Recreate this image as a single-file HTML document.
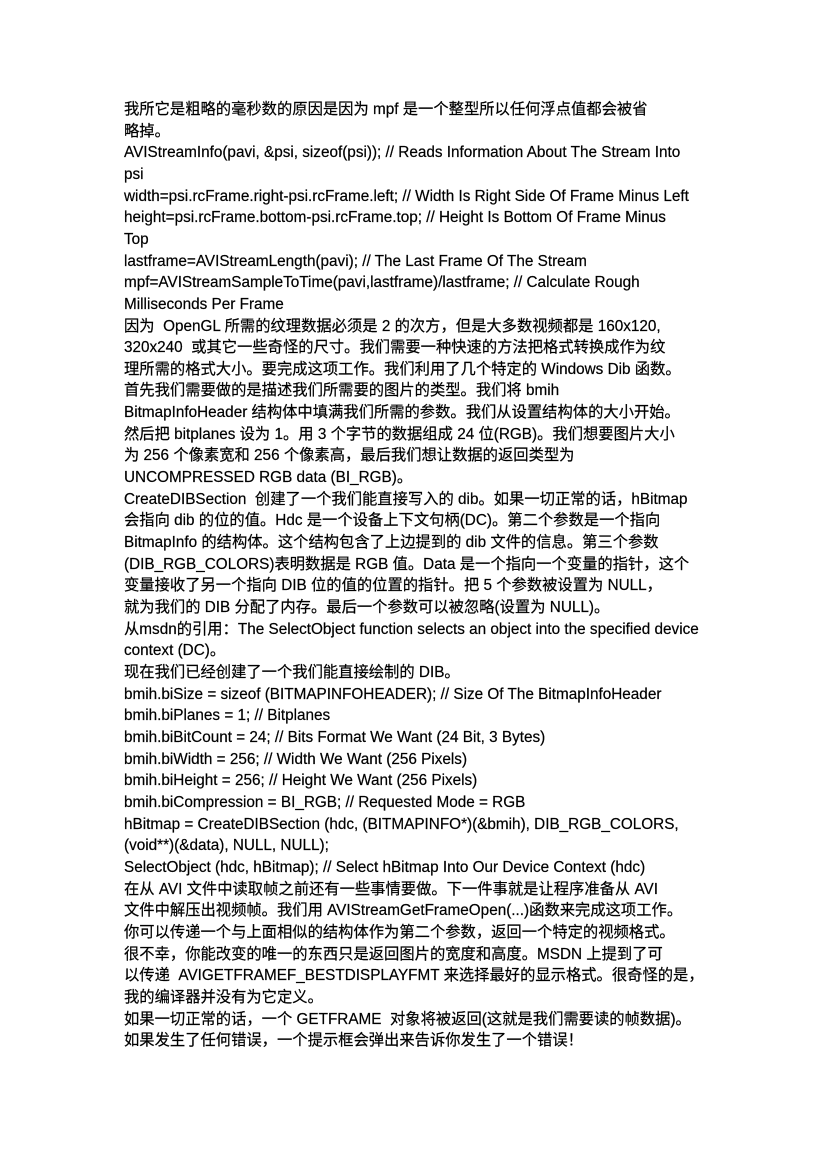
<!DOCTYPE html>
<html><head><meta charset="utf-8">
<style>
html,body{margin:0;padding:0;background:#fff;}
body{width:827px;height:1169px;position:relative;overflow:hidden;}
.l{position:absolute;left:124px;white-space:nowrap;font-family:"Liberation Sans","Noto Sans CJK SC",sans-serif;font-size:15.3px;line-height:20px;color:#000;-webkit-text-stroke:0.2px #000;}
</style></head><body>
<div class="l" style="top:100px">我所它是粗略的毫秒数的原因是因为 mpf 是一个整型所以任何浮点值都会被省</div>
<div class="l" style="top:122px">略掉。</div>
<div class="l" style="top:143px">AVIStreamInfo(pavi, &amp;psi, sizeof(psi)); // Reads Information About The Stream Into</div>
<div class="l" style="top:165px">psi</div>
<div class="l" style="top:187px">width=psi.rcFrame.right-psi.rcFrame.left; // Width Is Right Side Of Frame Minus Left</div>
<div class="l" style="top:208px">height=psi.rcFrame.bottom-psi.rcFrame.top; // Height Is Bottom Of Frame Minus</div>
<div class="l" style="top:230px">Top</div>
<div class="l" style="top:252px">lastframe=AVIStreamLength(pavi); // The Last Frame Of The Stream</div>
<div class="l" style="top:273px">mpf=AVIStreamSampleToTime(pavi,lastframe)/lastframe; // Calculate Rough</div>
<div class="l" style="top:295px">Milliseconds Per Frame</div>
<div class="l" style="top:317px">因为 &nbsp;OpenGL 所需的纹理数据必须是 2 的次方，但是大多数视频都是 160x120,</div>
<div class="l" style="top:338px">320x240 &nbsp;或其它一些奇怪的尺寸。我们需要一种快速的方法把格式转换成作为纹</div>
<div class="l" style="top:360px">理所需的格式大小。要完成这项工作。我们利用了几个特定的 Windows Dib 函数。</div>
<div class="l" style="top:381px">首先我们需要做的是描述我们所需要的图片的类型。我们将 bmih</div>
<div class="l" style="top:403px">BitmapInfoHeader 结构体中填满我们所需的参数。我们从设置结构体的大小开始。</div>
<div class="l" style="top:425px">然后把 bitplanes 设为 1。用 3 个字节的数据组成 24 位(RGB)。我们想要图片大小</div>
<div class="l" style="top:446px">为 256 个像素宽和 256 个像素高，最后我们想让数据的返回类型为</div>
<div class="l" style="top:468px">UNCOMPRESSED RGB data (BI_RGB)。</div>
<div class="l" style="top:490px">CreateDIBSection &nbsp;创建了一个我们能直接写入的 dib。如果一切正常的话，hBitmap</div>
<div class="l" style="top:511px">会指向 dib 的位的值。Hdc 是一个设备上下文句柄(DC)。第二个参数是一个指向</div>
<div class="l" style="top:533px">BitmapInfo 的结构体。这个结构包含了上边提到的 dib 文件的信息。第三个参数</div>
<div class="l" style="top:555px">(DIB_RGB_COLORS)表明数据是 RGB 值。Data 是一个指向一个变量的指针，这个</div>
<div class="l" style="top:576px">变量接收了另一个指向 DIB 位的值的位置的指针。把 5 个参数被设置为 NULL，</div>
<div class="l" style="top:598px">就为我们的 DIB 分配了内存。最后一个参数可以被忽略(设置为 NULL)。</div>
<div class="l" style="top:620px">从msdn的引用：The SelectObject function selects an object into the specified device</div>
<div class="l" style="top:641px">context (DC)。</div>
<div class="l" style="top:663px">现在我们已经创建了一个我们能直接绘制的 DIB。</div>
<div class="l" style="top:685px">bmih.biSize = sizeof (BITMAPINFOHEADER); // Size Of The BitmapInfoHeader</div>
<div class="l" style="top:706px">bmih.biPlanes = 1; // Bitplanes</div>
<div class="l" style="top:728px">bmih.biBitCount = 24; // Bits Format We Want (24 Bit, 3 Bytes)</div>
<div class="l" style="top:750px">bmih.biWidth = 256; // Width We Want (256 Pixels)</div>
<div class="l" style="top:771px">bmih.biHeight = 256; // Height We Want (256 Pixels)</div>
<div class="l" style="top:793px">bmih.biCompression = BI_RGB; // Requested Mode = RGB</div>
<div class="l" style="top:815px">hBitmap = CreateDIBSection (hdc, (BITMAPINFO*)(&amp;bmih), DIB_RGB_COLORS,</div>
<div class="l" style="top:836px">(void**)(&amp;data), NULL, NULL);</div>
<div class="l" style="top:858px">SelectObject (hdc, hBitmap); // Select hBitmap Into Our Device Context (hdc)</div>
<div class="l" style="top:880px">在从 AVI 文件中读取帧之前还有一些事情要做。下一件事就是让程序准备从 AVI</div>
<div class="l" style="top:901px">文件中解压出视频帧。我们用 AVIStreamGetFrameOpen(...)函数来完成这项工作。</div>
<div class="l" style="top:923px">你可以传递一个与上面相似的结构体作为第二个参数，返回一个特定的视频格式。</div>
<div class="l" style="top:945px">很不幸，你能改变的唯一的东西只是返回图片的宽度和高度。MSDN 上提到了可</div>
<div class="l" style="top:966px">以传递 &nbsp;AVIGETFRAMEF_BESTDISPLAYFMT 来选择最好的显示格式。很奇怪的是，</div>
<div class="l" style="top:988px">我的编译器并没有为它定义。</div>
<div class="l" style="top:1010px">如果一切正常的话，一个 GETFRAME &nbsp;对象将被返回(这就是我们需要读的帧数据)。</div>
<div class="l" style="top:1031px">如果发生了任何错误，一个提示框会弹出来告诉你发生了一个错误！</div>
</body></html>
